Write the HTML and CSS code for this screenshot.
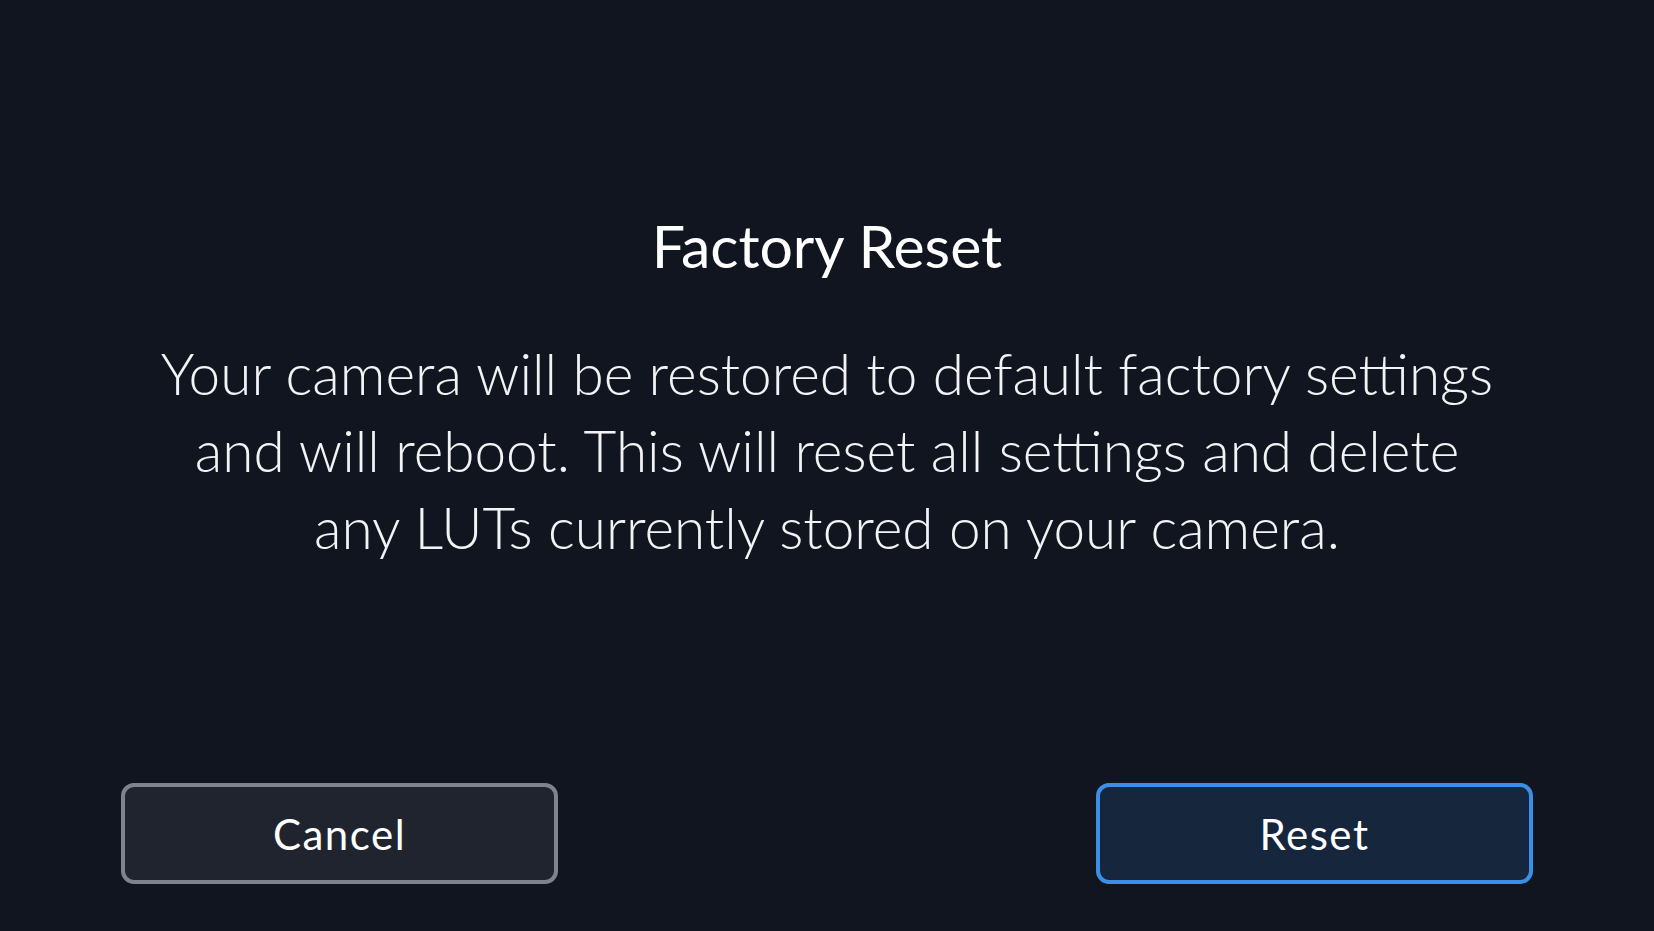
FILE: index.html
```html
<!DOCTYPE html>
<html lang="en">
<head>
    <meta charset="UTF-8">
    <meta name="viewport" content="width=device-width, initial-scale=1.0">
    <title>Factory Reset</title>
    <link rel="stylesheet" href="styles.css">
</head>
<body>
    <div class="dialog">
        <h1 class="title">Factory Reset</h1>
        <p class="message">Your camera will be restored to default factory settings<br>and will reboot. This will reset all settings and delete<br>any LUTs currently stored on your camera.</p>
        <div class="actions">
            <button class="btn btn-cancel">Cancel</button>
            <button class="btn btn-reset">Reset</button>
        </div>
    </div>
</body>
</html>
```

FILE: styles.css
```css
html, body {
    margin: 0;
    padding: 0;
}
body {
    font-family: Lato, "Open Sans", sans-serif;
    background-color: #10151f;
    color: #fff;
    width: 1654px;
    height: 931px;
    overflow: hidden;
}
.dialog {
    display: flex;
    flex-direction: column;
    align-items: center;
    height: 100%;
    box-sizing: border-box;
    padding: 210px 121px 47px;
}
.title {
    margin: 0;
    font-size: 59px;
    line-height: 72px;
    font-weight: 400;
}
.message {
    margin: 53px 0 0;
    font-size: 56.7px;
    line-height: 77px;
    font-weight: 300;
    text-align: center;
    color: #f2f3f5;
}
.actions {
    margin-top: auto;
    width: 100%;
    display: flex;
    justify-content: space-between;
}
.btn {
    width: 437px;
    height: 101px;
    box-sizing: border-box;
    border-radius: 13px;
    border: 4px solid;
    font-family: inherit;
    font-size: 42px;
    font-weight: 400;
    letter-spacing: 1.5px;
    color: #fff;
    cursor: pointer;
}
.btn-cancel {
    background-color: #20242f;
    border-color: #7f838d;
}
.btn-reset {
    background-color: #16263c;
    border-color: #3b8fe6;
}
```
